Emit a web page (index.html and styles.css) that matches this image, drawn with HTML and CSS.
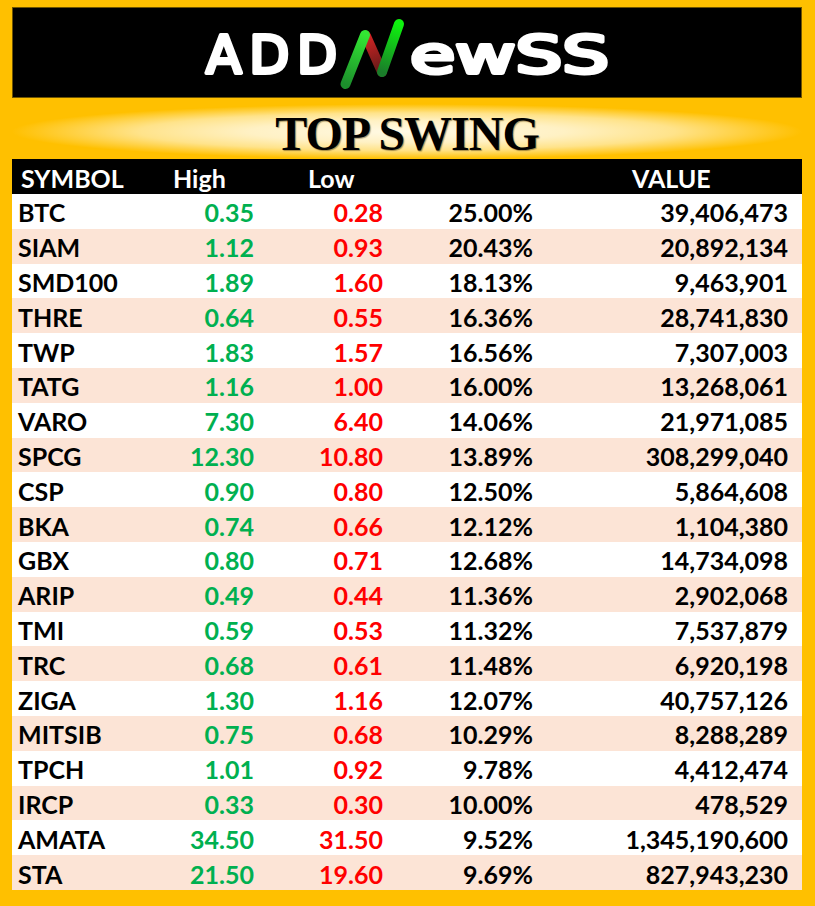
FILE: index.html
```html
<!DOCTYPE html>
<html lang="en">
<head>
<meta charset="utf-8">
<title>TOP SWING</title>
<link rel="stylesheet" href="styles.css">
</head>
<body>
<div class="page">
  <header class="logo-box">
    <svg class="logo" width="790" height="91" viewBox="0 0 790 91" xmlns="http://www.w3.org/2000/svg">
      <defs>
        <linearGradient id="gl" gradientUnits="userSpaceOnUse" x1="353" y1="28" x2="333.5" y2="77">
          <stop offset="0" stop-color="#33e633"/>
          <stop offset="1" stop-color="#1c8f2c"/>
        </linearGradient>
        <linearGradient id="gr" gradientUnits="userSpaceOnUse" x1="387" y1="17" x2="370" y2="65">
          <stop offset="0" stop-color="#0ef20e"/>
          <stop offset="1" stop-color="#1a7d2a"/>
        </linearGradient>
        <linearGradient id="rd" gradientUnits="userSpaceOnUse" x1="354" y1="29" x2="370" y2="65">
          <stop offset="0" stop-color="#d42424"/>
          <stop offset="1" stop-color="#5e1a18"/>
        </linearGradient>
      </defs>
      <text class="logo-text" x="194" y="65.5" textLength="131" lengthAdjust="spacing">ADD</text>
      <line class="mark" x1="354" y1="29" x2="370" y2="65" stroke="url(#rd)"/>
      <line class="mark" x1="353" y1="28" x2="333.5" y2="77" stroke="url(#gl)"/>
      <line class="mark" x1="387" y1="17" x2="370" y2="65" stroke="url(#gr)"/>
      <text class="logo-text" x="398" y="65.5" textLength="199" lengthAdjust="spacingAndGlyphs">ewSS</text>
    </svg>
  </header>
  <div class="title-band">
    <h1 class="title">TOP SWING</h1>
  </div>
  <div class="table">
    <div class="row head">
      <div class="c sym">SYMBOL</div><div class="c hi">High</div><div class="c lo">Low</div><div class="c pct"></div><div class="c val">VALUE</div>
    </div>
    <div class="row"><div class="c sym">BTC</div><div class="c hi">0.35</div><div class="c lo">0.28</div><div class="c pct">25.00%</div><div class="c val">39,406,473</div></div>
    <div class="row"><div class="c sym">SIAM</div><div class="c hi">1.12</div><div class="c lo">0.93</div><div class="c pct">20.43%</div><div class="c val">20,892,134</div></div>
    <div class="row"><div class="c sym">SMD100</div><div class="c hi">1.89</div><div class="c lo">1.60</div><div class="c pct">18.13%</div><div class="c val">9,463,901</div></div>
    <div class="row"><div class="c sym">THRE</div><div class="c hi">0.64</div><div class="c lo">0.55</div><div class="c pct">16.36%</div><div class="c val">28,741,830</div></div>
    <div class="row"><div class="c sym">TWP</div><div class="c hi">1.83</div><div class="c lo">1.57</div><div class="c pct">16.56%</div><div class="c val">7,307,003</div></div>
    <div class="row"><div class="c sym">TATG</div><div class="c hi">1.16</div><div class="c lo">1.00</div><div class="c pct">16.00%</div><div class="c val">13,268,061</div></div>
    <div class="row"><div class="c sym">VARO</div><div class="c hi">7.30</div><div class="c lo">6.40</div><div class="c pct">14.06%</div><div class="c val">21,971,085</div></div>
    <div class="row"><div class="c sym">SPCG</div><div class="c hi">12.30</div><div class="c lo">10.80</div><div class="c pct">13.89%</div><div class="c val">308,299,040</div></div>
    <div class="row"><div class="c sym">CSP</div><div class="c hi">0.90</div><div class="c lo">0.80</div><div class="c pct">12.50%</div><div class="c val">5,864,608</div></div>
    <div class="row"><div class="c sym">BKA</div><div class="c hi">0.74</div><div class="c lo">0.66</div><div class="c pct">12.12%</div><div class="c val">1,104,380</div></div>
    <div class="row"><div class="c sym">GBX</div><div class="c hi">0.80</div><div class="c lo">0.71</div><div class="c pct">12.68%</div><div class="c val">14,734,098</div></div>
    <div class="row"><div class="c sym">ARIP</div><div class="c hi">0.49</div><div class="c lo">0.44</div><div class="c pct">11.36%</div><div class="c val">2,902,068</div></div>
    <div class="row"><div class="c sym">TMI</div><div class="c hi">0.59</div><div class="c lo">0.53</div><div class="c pct">11.32%</div><div class="c val">7,537,879</div></div>
    <div class="row"><div class="c sym">TRC</div><div class="c hi">0.68</div><div class="c lo">0.61</div><div class="c pct">11.48%</div><div class="c val">6,920,198</div></div>
    <div class="row"><div class="c sym">ZIGA</div><div class="c hi">1.30</div><div class="c lo">1.16</div><div class="c pct">12.07%</div><div class="c val">40,757,126</div></div>
    <div class="row"><div class="c sym">MITSIB</div><div class="c hi">0.75</div><div class="c lo">0.68</div><div class="c pct">10.29%</div><div class="c val">8,288,289</div></div>
    <div class="row"><div class="c sym">TPCH</div><div class="c hi">1.01</div><div class="c lo">0.92</div><div class="c pct">9.78%</div><div class="c val">4,412,474</div></div>
    <div class="row"><div class="c sym">IRCP</div><div class="c hi">0.33</div><div class="c lo">0.30</div><div class="c pct">10.00%</div><div class="c val">478,529</div></div>
    <div class="row"><div class="c sym">AMATA</div><div class="c hi">34.50</div><div class="c lo">31.50</div><div class="c pct">9.52%</div><div class="c val">1,345,190,600</div></div>
    <div class="row"><div class="c sym">STA</div><div class="c hi">21.50</div><div class="c lo">19.60</div><div class="c pct">9.69%</div><div class="c val">827,943,230</div></div>
  </div>
</div>
</body>
</html>
```
FILE: styles.css
```css
html, body {
  margin: 0;
  padding: 0;
  background: #FFC000;
}

.page {
  width: 790px;
  padding: 7px 13px 0 12px;
}

.logo-box {
  height: 91px;
  background: #000;
  box-sizing: border-box;
  border: 1px solid #6e5400;
  overflow: hidden;
}

.logo {
  display: block;
  margin: -1px;
}

.logo-text {
  font-family: "DejaVu Sans", sans-serif;
  font-size: 52px;
  fill: #fff;
  stroke: #fff;
  stroke-width: 4px;
  stroke-linejoin: round;
}

.mark {
  stroke-width: 10px;
  stroke-linecap: round;
}

.title-band {
  height: 61px;
  box-sizing: border-box;
  padding-top: 10px;
  display: flex;
  align-items: center;
  justify-content: center;
  background: radial-gradient(ellipse closest-side at 50% 55%, #FFFAE6 0%, #FFF1C4 40%, #FFE38A 68%, #FFC000 100%);
}

.title {
  margin: 0;
  font-family: "Liberation Serif", "Times New Roman", serif;
  font-weight: bold;
  font-size: 48px;
  line-height: 1;
  letter-spacing: -1px;
  color: #000;
  text-shadow: 1px 1px 1px rgba(60, 40, 0, 0.45);
}

.table {
  font-family: Lato, "Noto Sans", sans-serif;
  font-weight: bold;
  font-size: 25px;
}

.row {
  display: grid;
  grid-template-columns: 150px 100px 130px 150px 260px;
  height: 34.8px;
  align-items: center;
  background: #fff;
  color: #000;
}

.row:nth-child(odd) {
  background: #FCE4D6;
}

.row.head {
  height: 35px;
  background: #000;
  color: #fff;
}

.c {
  line-height: 30px;
  padding-top: 2px;
  white-space: nowrap;
}

.sym { padding-left: 6px; }
.hi { text-align: right; padding-right: 8px; color: #00B050; }
.lo { text-align: right; padding-right: 9px; color: #FF0000; }
.pct { text-align: right; padding-right: 9px; }
.val { text-align: right; padding-right: 14px; }

.head .sym { padding-left: 9px; }
.head .hi { text-align: left; padding-left: 11px; padding-right: 0; color: #fff; }
.head .lo { text-align: left; padding-left: 46px; padding-right: 0; color: #fff; }
.head .val { text-align: left; padding-left: 90px; padding-right: 0; }
```
